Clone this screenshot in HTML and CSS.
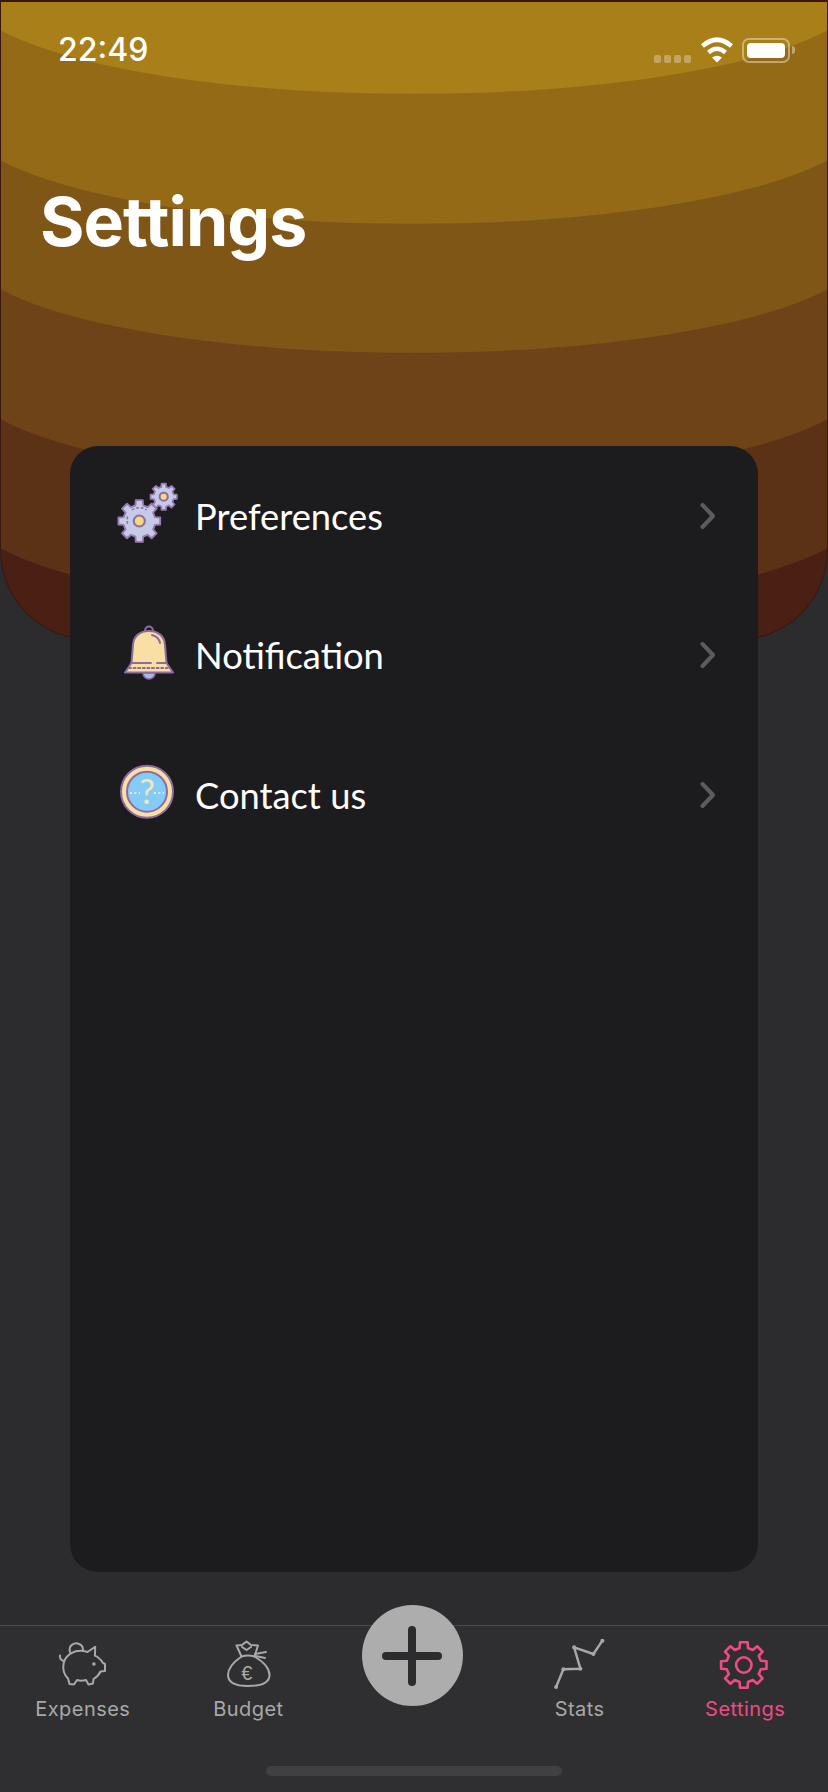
FILE: index.html
```html
<!DOCTYPE html>
<html lang="en">
<head>
    <meta charset="UTF-8">
    <meta name="viewport" content="width=device-width, initial-scale=1.0">
    <title>Settings</title>
    <link rel="stylesheet" href="styles.css">
</head>
<body>
    <div class="phone">
        <header class="header">
            <svg class="waves" viewBox="0 0 828 640" preserveAspectRatio="none" aria-hidden="true">
                <path fill="#5b3216" d="M0 0H828V548A450 105 0 0 1 0 548Z"/>
                <path fill="#6f4318" d="M0 0H828V419A450 105 0 0 1 0 419Z"/>
                <path fill="#7f5616" d="M0 0H828V289A450 105 0 0 1 0 289Z"/>
                <path fill="#946a17" d="M0 0H828V160A450 105 0 0 1 0 160Z"/>
                <path fill="#a97f1a" d="M0 0H828V30A450 105 0 0 1 0 30Z"/>
            </svg>
            <div class="status">
                <span class="time">22:49</span>
                <div class="signal"><i></i><i></i><i></i><i></i></div>
                <svg class="wifi" width="34" height="26" viewBox="0 0 34 26">
                    <path d="M2.5 9Q17 -3.5 31.5 9" fill="none" stroke="#fff" stroke-width="4.6"/>
                    <path d="M8.5 15.5Q17 8 25.5 15.5" fill="none" stroke="#fff" stroke-width="4.4"/>
                    <path d="M12 20.5L17 25.5L22 20.5Q17 17 12 20.5Z" fill="#fff"/>
                </svg>
                <div class="battery"><div class="battery-fill"></div></div>
                <div class="battery-nub"></div>
            </div>
            <h1 class="title">Settings</h1>
        </header>

        <main class="card">
            <a class="row">
                <svg class="row-icon" width="60" height="60" viewBox="0 0 60 60">
                    <g transform="translate(21.3 35) scale(.92)">
                        <path class="cog" d="M-4.2 -17L-3.8 -22.7L3.8 -22.7L4.2 -17L9.05 -15L13.36 -18.74L18.74 -13.36L15 -9.05L17 -4.2L22.7 -3.8L22.7 3.8L17 4.2L15 9.05L18.74 13.36L13.36 18.74L9.05 15L4.2 17L3.8 22.7L-3.8 22.7L-4.2 17L-9.05 15L-13.36 18.74L-18.74 13.36L-15 9.05L-17 4.2L-22.7 3.8L-22.7 -3.8L-17 -4.2L-15 -9.05L-18.74 -13.36L-13.36 -18.74L-9.05 -15Z"/>
                        <circle class="cog-eye" r="6"/>
                        <path class="cog-line" d="M-8 -12A14 14 0 0 1 8 -12M-13 -5V5" stroke-dasharray="3 2"/>
                    </g>
                    <g transform="translate(45.7 10.7) scale(.58)">
                        <path class="cog thick" d="M-4.2 -17L-3.8 -22.7L3.8 -22.7L4.2 -17L9.05 -15L13.36 -18.74L18.74 -13.36L15 -9.05L17 -4.2L22.7 -3.8L22.7 3.8L17 4.2L15 9.05L18.74 13.36L13.36 18.74L9.05 15L4.2 17L3.8 22.7L-3.8 22.7L-4.2 17L-9.05 15L-13.36 18.74L-18.74 13.36L-15 9.05L-17 4.2L-22.7 3.8L-22.7 -3.8L-17 -4.2L-15 -9.05L-18.74 -13.36L-13.36 -18.74L-9.05 -15Z"/>
                        <circle class="cog-eye thick" r="7"/>
                    </g>
                </svg>
                <span class="row-label">Preferences</span>
                <svg class="chevron" width="16" height="26" viewBox="0 0 16 26"><path d="M2.5 2L13 13L2.5 24"/></svg>
            </a>
            <a class="row">
                <svg class="row-icon" width="60" height="60" viewBox="0 0 60 60">
                    <path class="bell-line" d="M27 6C27 0 35 0 35 6"/>
                    <path class="bell-clap" d="M25 48A6 6 0 0 0 37 48Z"/>
                    <path class="bell-body" d="M13.5 38L15 20C15.5 11 22 6 31 6C40 6 46.5 11 47 20L48.5 38L55 47.5H7Z"/>
                    <path class="bell-line" d="M13.5 38H33M39 38H48.5M34 10C38 11 41 13 42 18"/>
                    <path class="bell-line" d="M11 43H52" stroke-dasharray="2 2.6"/>
                </svg>
                <span class="row-label">Notification</span>
                <svg class="chevron" width="16" height="26" viewBox="0 0 16 26"><path d="M2.5 2L13 13L2.5 24"/></svg>
            </a>
            <a class="row">
                <svg class="row-icon" width="60" height="60" viewBox="0 0 60 60">
                    <circle class="help-ring" cx="29" cy="26.7" r="26"/>
                    <circle class="help-face" cx="29" cy="26.7" r="20"/>
                    <path class="help-dots" d="M12 28H22M36 28H46" stroke-dasharray="2 2.4"/>
                    <text class="help-mark" x="29" y="39" text-anchor="middle">?</text>
                </svg>
                <span class="row-label">Contact us</span>
                <svg class="chevron" width="16" height="26" viewBox="0 0 16 26"><path d="M2.5 2L13 13L2.5 24"/></svg>
            </a>
        </main>

        <nav class="tabbar">
            <div class="tabs">
                <a class="tab">
                    <svg class="tab-icon" width="60" height="50" viewBox="0 0 60 50">
                        <path d="M34.5 13L42.2 7.7L41.9 16.7C45 18 48 21 50 24L52 25V32L47.5 32.5C46 36 43 38.5 40.5 40L40 44.5L35.5 45.5L33 41C29 42 27 42 24 41L21 45.5L16.5 45L15 39.5C11.5 36 9.5 31 10.5 25C12 16 22 9 34.5 13Z"/>
                        <path d="M17 13C15 6 22 3 26 5C29 6 30 9 30 11M10.5 22C8 21 6.5 19 7 16.5"/>
                        <circle class="tab-dot" cx="40.9" cy="25" r="1.8"/>
                    </svg>
                    <span>Expenses</span>
                </a>
                <a class="tab">
                    <svg class="tab-icon" width="60" height="50" viewBox="0 0 60 50">
                        <path d="M23.5 17.5C17 22 10 29 10 36C10 44 17 47 30 47C43 47 51.5 44 51.5 36C51.5 29 44 22 36.5 17.5"/>
                        <path d="M23.5 17.5L18.5 6.5L24 6L28.5 2.5L33 6L40 6.5L36.5 17.5C32 16 28 16 23.5 17.5Z"/>
                        <path d="M24 8L28.5 11L33 8M37 15L48 13M37.5 17L47 19"/>
                        <text class="euro" x="29" y="40.5" text-anchor="middle">€</text>
                    </svg>
                    <span>Budget</span>
                </a>
                <div class="tab-add">
                    <button class="add-button" type="button">
                        <svg width="60" height="60" viewBox="0 0 60 60"><path d="M4 30H56M30 4V56"/></svg>
                    </button>
                </div>
                <a class="tab">
                    <svg class="tab-icon stats" width="60" height="50" viewBox="0 0 60 50">
                        <path d="M6.1 48L13.4 30.3L30.4 29.7L24.1 8.3L43.4 15L52.4 1.7"/>
                        <circle class="tab-dot" cx="6.1" cy="48" r="2"/>
                        <circle class="tab-dot" cx="13.4" cy="30.3" r="2"/>
                        <circle class="tab-dot" cx="30.4" cy="29.7" r="2"/>
                        <circle class="tab-dot" cx="24.1" cy="8.3" r="2"/>
                        <circle class="tab-dot" cx="43.4" cy="15" r="2"/>
                        <circle class="tab-dot" cx="52.4" cy="1.7" r="2"/>
                    </svg>
                    <span>Stats</span>
                </a>
                <a class="tab active">
                    <svg class="tab-icon" width="60" height="50" viewBox="0 0 60 50">
                        <g transform="translate(28.8 26)">
                            <path d="M-4.2 -17L-3.8 -22.7L3.8 -22.7L4.2 -17L9.05 -15L13.36 -18.74L18.74 -13.36L15 -9.05L17 -4.2L22.7 -3.8L22.7 3.8L17 4.2L15 9.05L18.74 13.36L13.36 18.74L9.05 15L4.2 17L3.8 22.7L-3.8 22.7L-4.2 17L-9.05 15L-13.36 18.74L-18.74 13.36L-15 9.05L-17 4.2L-22.7 3.8L-22.7 -3.8L-17 -4.2L-15 -9.05L-18.74 -13.36L-13.36 -18.74L-9.05 -15Z"/>
                            <circle r="7.7"/>
                        </g>
                    </svg>
                    <span>Settings</span>
                </a>
            </div>
            <div class="home-bar"></div>
        </nav>
    </div>
</body>
</html>
```

FILE: styles.css
```css
* {
    box-sizing: border-box;
}
body {
    margin: 0;
    background-color: #2c2c2e;
    font-family: Inter, "Liberation Sans", sans-serif;
    color: #fff;
}
.phone {
    display: flex;
    flex-direction: column;
    height: 1792px;
    overflow: hidden;
}

/* header */
.header {
    position: relative;
    flex: none;
    height: 640px;
    padding: 0 32px 0 41px;
    background-color: #4a1f14;
    border: 1px solid rgba(0, 0, 0, 0.22);
    border-top-width: 2px;
    border-radius: 0 0 90px 90px;
    overflow: hidden;
}
.waves {
    position: absolute;
    top: -2px;
    left: -1px;
    width: 828px;
    height: 640px;
}
.status {
    position: relative;
    display: flex;
    align-items: center;
    height: 26px;
    margin-top: 35px;
    padding-left: 16px;
}
.time {
    font-size: 32px;
    font-weight: 500;
    line-height: 26px;
    margin-right: auto;
}
.signal {
    display: flex;
    gap: 3px;
    margin-top: 17px;
    margin-right: 9px;
}
.signal i {
    width: 7px;
    height: 8px;
    border-radius: 2px;
    background-color: rgba(255, 255, 255, 0.3);
}
.wifi {
    margin-right: 8px;
}
.battery {
    width: 48px;
    height: 25px;
    padding: 3px;
    border: 2px solid rgba(255, 255, 255, 0.4);
    border-radius: 7px;
}
.battery-fill {
    height: 100%;
    border-radius: 4px;
    background-color: #fff;
}
.battery-nub {
    width: 3px;
    height: 8px;
    margin-left: 2px;
    border-radius: 0 3px 3px 0;
    background-color: rgba(255, 255, 255, 0.4);
}
.title {
    position: relative;
    margin: 118px 0 0 -2px;
    font-size: 68px;
    font-weight: 700;
    line-height: 80px;
    letter-spacing: -1px;
}

/* card with the menu */
.card {
    flex: 1;
    margin: -194px 70px 53px;
    position: relative;
    background-color: #1c1c1e;
    border-radius: 28px;
}
.row {
    display: flex;
    align-items: center;
    height: 139.5px;
    padding: 0 42px 0 48px;
}
.row-icon {
    flex: none;
    overflow: visible;
}
.row-label {
    margin-left: 17px;
    font-family: Lato, sans-serif;
    font-size: 36.3px;
}
.chevron {
    margin-left: auto;
    fill: none;
    stroke: #5c5c5e;
    stroke-width: 4;
    stroke-linecap: round;
    stroke-linejoin: round;
}

.cog {
    fill: #c5cae9;
    stroke: #9a7bb0;
    stroke-width: 2;
    stroke-linejoin: round;
}
.cog.thick {
    stroke-width: 3;
}
.cog-eye {
    fill: #f7d77f;
    stroke: #8d6c9f;
    stroke-width: 2.2;
}
.cog-eye.thick {
    stroke-width: 3.5;
}
.cog-line {
    fill: none;
    stroke: #8d6c9f;
    stroke-width: 1.6;
}
.bell-body {
    fill: #f9dfa4;
    stroke: #8d6c9f;
    stroke-width: 2;
    stroke-linejoin: round;
}
.bell-line {
    fill: none;
    stroke: #8d6c9f;
    stroke-width: 2;
    stroke-linecap: round;
}
.bell-clap {
    fill: #a9b8ea;
    stroke: #8d6c9f;
    stroke-width: 1.6;
}
.help-ring {
    fill: #f9dfa4;
    stroke: #8d6c9f;
    stroke-width: 2;
}
.help-face {
    fill: #85cbf8;
    stroke: #8d6c9f;
    stroke-width: 2;
}
.help-dots {
    fill: none;
    stroke: #f9e6b8;
    stroke-width: 2;
}
.help-mark {
    font-family: Lato, sans-serif;
    font-size: 34px;
    fill: #f9e6b8;
}

/* bottom tabs */
.tabbar {
    flex: none;
    display: flex;
    flex-direction: column;
    height: 167px;
    background-color: #2f2f31;
    border-top: 1px solid #4b4b4d;
}
.tabs {
    display: grid;
    grid-template-columns: repeat(5, 1fr);
    padding-top: 13px;
}
.tab {
    display: flex;
    flex-direction: column;
    align-items: center;
    color: #a8a8a8;
    font-size: 20px;
    line-height: 24px;
    letter-spacing: 0.45px;
}
.tab span {
    margin-top: 8px;
}
.tab-icon {
    overflow: visible;
    fill: none;
    stroke: #a8a8a8;
    stroke-width: 2;
    stroke-linejoin: round;
    stroke-linecap: round;
}
.tab-icon.stats {
    stroke-width: 2.4;
}
.tab-dot {
    fill: #a8a8a8;
    stroke: none;
}
.euro {
    font-family: "Liberation Sans", sans-serif;
    font-size: 20px;
    fill: #a8a8a8;
    stroke: none;
}
.tab.active {
    color: #ef4a86;
}
.tab.active .tab-icon {
    stroke: #ef4a86;
    stroke-width: 2.6;
}
.tab-add {
    display: flex;
    justify-content: center;
}
.add-button {
    display: flex;
    align-items: center;
    justify-content: center;
    width: 101px;
    height: 101px;
    margin: -34px 3px 0 0;
    padding: 0;
    border: none;
    border-radius: 50%;
    background-color: #adadad;
}
.add-button path {
    fill: none;
    stroke: #2c2c2e;
    stroke-width: 8;
    stroke-linecap: round;
}
.home-bar {
    align-self: center;
    width: 296px;
    height: 10px;
    margin-top: auto;
    margin-bottom: 16px;
    border-radius: 5px;
    background-color: #404042;
}
```
